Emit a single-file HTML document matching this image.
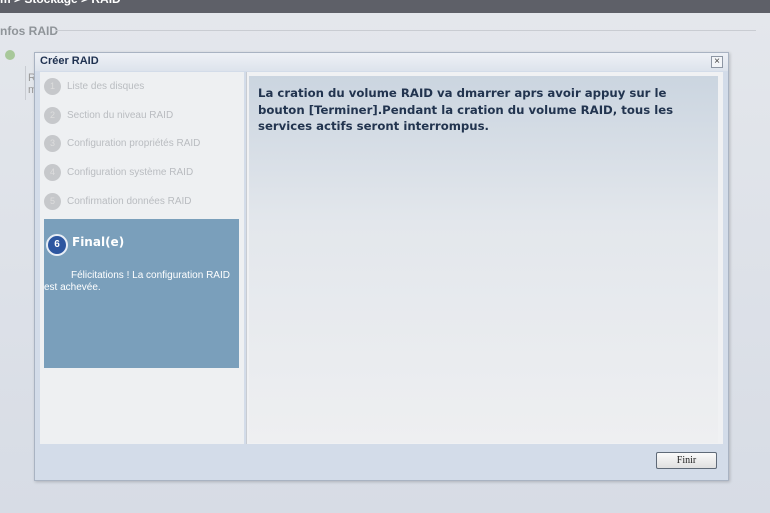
<!DOCTYPE html>
<html><head><style>
body{margin:0;width:770px;height:513px;background:#dde1e8;font-family:"Liberation Sans",sans-serif;position:relative;overflow:hidden}
.a{position:absolute}
</style></head><body>
<div class="a" style="left:0;top:13px;width:770px;height:500px;background:linear-gradient(#e4e7ec,#d7dce5)"></div>
<div class="a" style="left:0;top:0;width:770px;height:13px;background:#5e6068;overflow:hidden"><div style="position:absolute;top:-8px;left:0;color:#fff;font-size:12px;font-weight:bold">m &gt; Stockage &gt; RAID</div></div>
<div class="a" style="left:0;top:24px;font-size:12px;font-weight:bold;color:#8f9499">nfos RAID</div>
<div class="a" style="left:56px;top:30px;width:700px;height:1px;background:#c9ccd2"></div>
<div class="a" style="left:5px;top:50px;width:10px;height:10px;border-radius:50%;background:#a8c89a"></div>
<div class="a" style="left:25px;top:66px;width:1px;height:34px;background:#c9ccd2"></div>
<div class="a" style="left:28px;top:72px;font-size:11px;color:#999;line-height:12px">R<br>m</div>
<div class="a" style="left:34px;top:52px;width:693px;height:427px;background:#d3dce9;border:1px solid #a9b3c2;box-shadow:1px 1px 3px rgba(0,0,0,.2)"></div>
<div class="a" style="left:35px;top:53px;width:693px;height:18px;background:linear-gradient(#eef1f6,#dde3ec)"></div>
<div class="a" style="left:40px;top:55px;font-size:11px;font-weight:bold;color:#1f3150">Créer RAID</div>
<div class="a" style="left:711px;top:56px;width:10px;height:10px;border:1px solid #8d96a3;background:#f3f5f8;font-size:10px;line-height:10px;text-align:center;color:#444">×</div>
<div class="a" style="left:40px;top:72px;width:204px;height:372px;background:#eef0f2"></div>
<div id="steps"></div>
<div class="a" style="left:44px;top:219px;width:195px;height:149px;background:#7a9fbb"></div>
<div class="a" style="left:46px;top:234px;width:18px;height:18px;border-radius:50%;background:#2d56a0;border:2px solid #e8eef6;color:#fff;font-size:10px;font-weight:bold;text-align:center;line-height:18px">6</div>
<div class="a" style="left:72px;top:235px;font-family:'DejaVu Sans',sans-serif;font-size:12px;font-weight:bold;color:#fff">Final(e)</div>
<div class="a" style="left:44px;top:270px;width:195px;font-size:10px;color:#fff;text-indent:27px;line-height:12px">Félicitations ! La configuration RAID est achevée.</div>
<div class="a" style="left:246px;top:72px;width:476px;height:372px;background:#f0f1f3;border-left:1px solid #c8ccd2"></div>
<div class="a" style="left:249px;top:76px;width:469px;height:367px;background:linear-gradient(#cbd5e0,#e3e7ec 40%,#eeeff1)"></div>
<div class="a" style="left:258px;top:85px;width:440px;font-family:'DejaVu Sans',sans-serif;font-size:11.7px;font-weight:bold;color:#22344f;line-height:16.5px">La cration du volume RAID va dmarrer aprs avoir appuy sur le bouton [Terminer].Pendant la cration du volume RAID, tous les services actifs seront interrompus.</div>
<div class="a" style="left:656px;top:452px;width:59px;height:15px;border:1px solid #5f6a78;border-radius:2px;background:linear-gradient(#fafafa,#e0e0e0);font-family:'Liberation Serif',serif;font-size:10px;text-align:center;line-height:15px;color:#222">Finir</div>
<script>
var t=["Liste des disques","Section du niveau RAID","Configuration propriétés RAID","Configuration système RAID","Confirmation données RAID"],h="";
t.forEach(function(s,i){var y=78+i*28.7;h+='<div class="a" style="left:44px;top:'+y+'px;width:17px;height:17px;border-radius:50%;background:#c6c8cb;color:#ddd;font-size:9px;text-align:center;line-height:17px">'+(i+1)+'</div><div class="a" style="left:67px;top:'+(y+3)+'px;font-size:10px;color:#b9bcc0">'+s+'</div>';});
document.getElementById("steps").innerHTML=h;
</script>
</body></html>
